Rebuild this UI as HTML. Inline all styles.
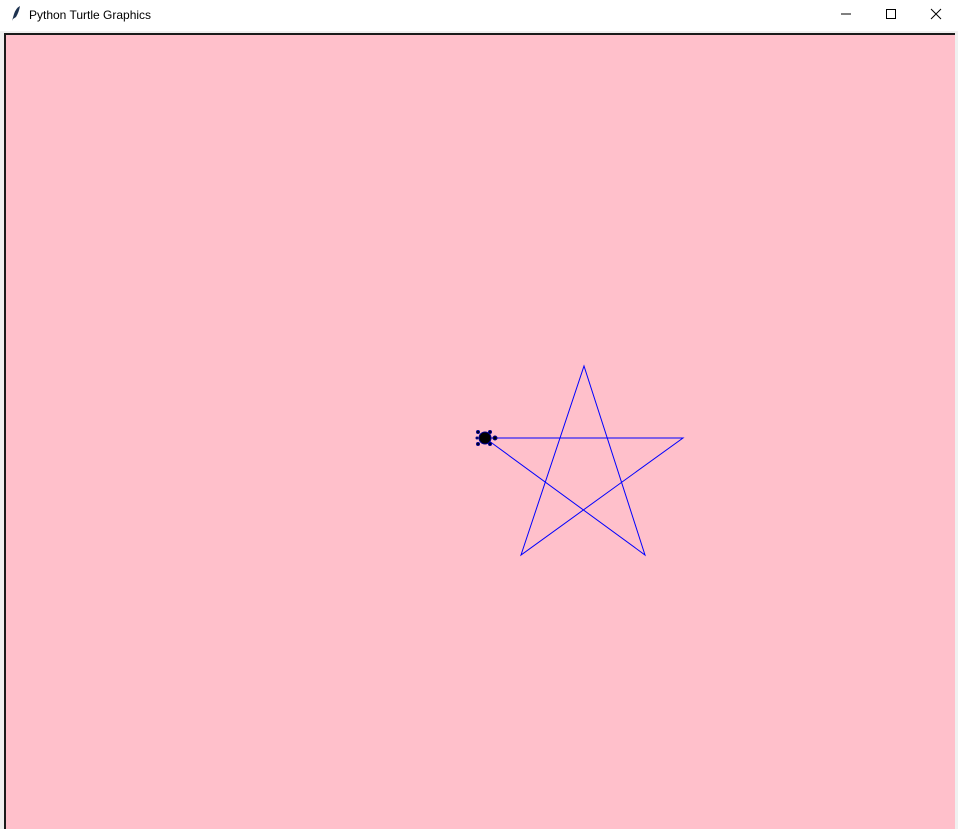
<!DOCTYPE html>
<html><head><style>
html,body{margin:0;padding:0;width:958px;height:829px;overflow:hidden;background:#f0f0f0;}
.title{position:absolute;left:0;top:0;width:958px;height:31px;background:#fff;font-family:"Liberation Sans",sans-serif;font-size:12px;color:#000;}
.title span{position:absolute;left:29px;top:8px;}
.canvas{position:absolute;left:4px;top:33px;width:951px;height:796px;background:#ffc0cb;border-left:2px solid #1a1a1a;border-top:2px solid #1a1a1a;box-sizing:border-box;}
svg{position:absolute;left:0;top:0;}
</style></head><body>
<div class="title"><span>Python Turtle Graphics</span></div>
<div class="canvas"></div>
<svg width="958" height="829">
<path d="M12 21 L14 14 Q16 8 20 6 Q19 12 16 17 L13 19 Z" fill="#1e3350"/>
<line x1="841" y1="14" x2="851" y2="14" stroke="#000" stroke-width="1"/>
<rect x="886.5" y="9.5" width="9" height="9" fill="none" stroke="#000"/>
<path d="M931 9 L941 19 M941 9 L931 19" stroke="#000" stroke-width="1"/>
<path d="M485 438 L683 438 L521 555 L584 366 L645 555 Z" fill="none" stroke="#0000ff" stroke-width="1"/>
<g fill="#000" stroke="#00008b" stroke-width="1">
<ellipse cx="485" cy="438" rx="6" ry="6"/>
<circle cx="495" cy="438" r="2"/>
<circle cx="478" cy="432" r="1.5"/><circle cx="478" cy="444" r="1.5"/>
<circle cx="490" cy="432" r="1.5"/><circle cx="490" cy="444" r="1.5"/>
<circle cx="477" cy="438" r="1"/>
</g>
</svg>
</body></html>
